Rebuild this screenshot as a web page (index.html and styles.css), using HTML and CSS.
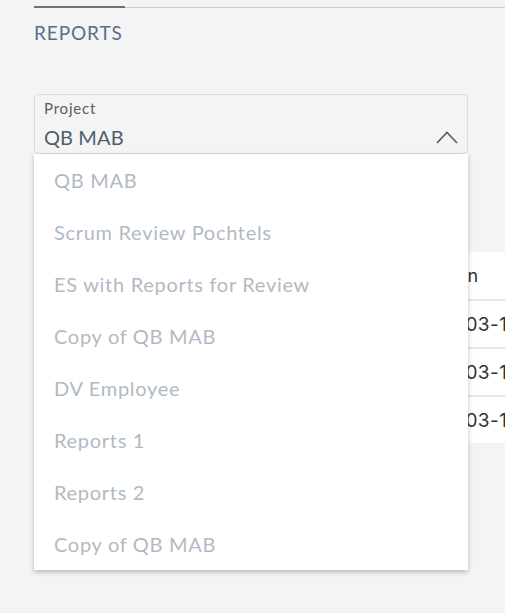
FILE: index.html
```html
<!DOCTYPE html>
<html lang="en">
<head>
<meta charset="utf-8">
<title>Reports</title>
<link rel="stylesheet" href="styles.css">
</head>
<body>
<div class="page">
  <div class="tabs"><div class="tab-active"></div></div>
  <h1 class="title">REPORTS</h1>
  <div class="select-wrap">
    <div class="select">
      <div class="select-label">Project</div>
      <div class="select-value">QB MAB</div>
      <svg class="chevron" width="22" height="13" viewBox="0 0 22 13"><path d="M1 12 L11 1.5 L21 12" fill="none" stroke="#4d5e6f" stroke-width="1.6"/></svg>
    </div>
    <ul class="menu">
      <li>QB MAB</li>
      <li>Scrum Review Pochtels</li>
      <li>ES with Reports for Review</li>
      <li>Copy of QB MAB</li>
      <li>DV Employee</li>
      <li>Reports 1</li>
      <li>Reports 2</li>
      <li>Copy of QB MAB</li>
    </ul>
  </div>
  <div class="card">
    <div class="row head"><span class="c1"></span><span class="c2">Created On</span></div>
    <div class="row"><span class="c1"></span><span class="c2">2024-03-14</span></div>
    <div class="row"><span class="c1"></span><span class="c2">2024-03-12</span></div>
    <div class="row"><span class="c1"></span><span class="c2">2024-03-11</span></div>
  </div>
</div>
</body>
</html>
```
FILE: styles.css
```css
html, body { margin: 0; padding: 0; }
body {
  background: #f4f4f4;
  font-family: Lato, "Open Sans", sans-serif;
  overflow: hidden;
  width: 505px;
  height: 613px;
}
.page { padding-left: 34px; }
.tabs {
  height: 7px;
  border-bottom: 1px solid #c9cdd4;
}
.tab-active {
  width: 91px;
  height: 6px;
  border-bottom: 2px solid #6b717a;
}
.title {
  margin: 14px 0 0;
  font-size: 19px;
  font-weight: 400;
  color: #5a6e86;
  line-height: 22px;
  letter-spacing: 0.9px;
}
.select-wrap {
  position: relative;
  width: 434px;
  margin-top: 50px;
}
.select {
  box-sizing: border-box;
  height: 60px;
  border: 1px solid #d3dde7;
  border-radius: 4px;
  padding: 4px 9px 0;
  position: relative;
}
.select-label {
  font-size: 15px;
  color: #575f66;
  line-height: 18px;
  letter-spacing: 0.8px;
}
.select-value {
  margin-top: 8px;
  font-size: 20px;
  color: #4d5e6f;
  line-height: 24px;
  letter-spacing: 0.1px;
}
.chevron {
  position: absolute;
  right: 9px;
  top: 36px;
}
.menu {
  position: absolute;
  top: 60px;
  left: 0;
  width: 434px;
  margin: 0;
  padding: 0;
  list-style: none;
  background: #fff;
  box-shadow: 0 2px 5px rgba(0,0,0,0.25);
  z-index: 2;
}
.menu li {
  height: 52px;
  line-height: 52px;
  padding-left: 20px;
  font-size: 20px;
  color: #b1bac3;
  letter-spacing: 0.7px;
}
.card {
  margin-top: 98px;
  width: 560px;
  background: #fff;
  font-family: Inter, "Open Sans", sans-serif;
  font-size: 19px;
  letter-spacing: 0.5px;
  color: #333;
}
.row {
  display: flex;
  height: 48px;
  align-items: center;
  border-top: 2px solid #e6e6e6;
  box-sizing: border-box;
}
.row.head {
  border-top: none;
  height: 47px;
  font-size: 18px;
  letter-spacing: 0;
}
.c1 { width: 373px; flex: none; }
.head .c1 { width: 347px; }
```
